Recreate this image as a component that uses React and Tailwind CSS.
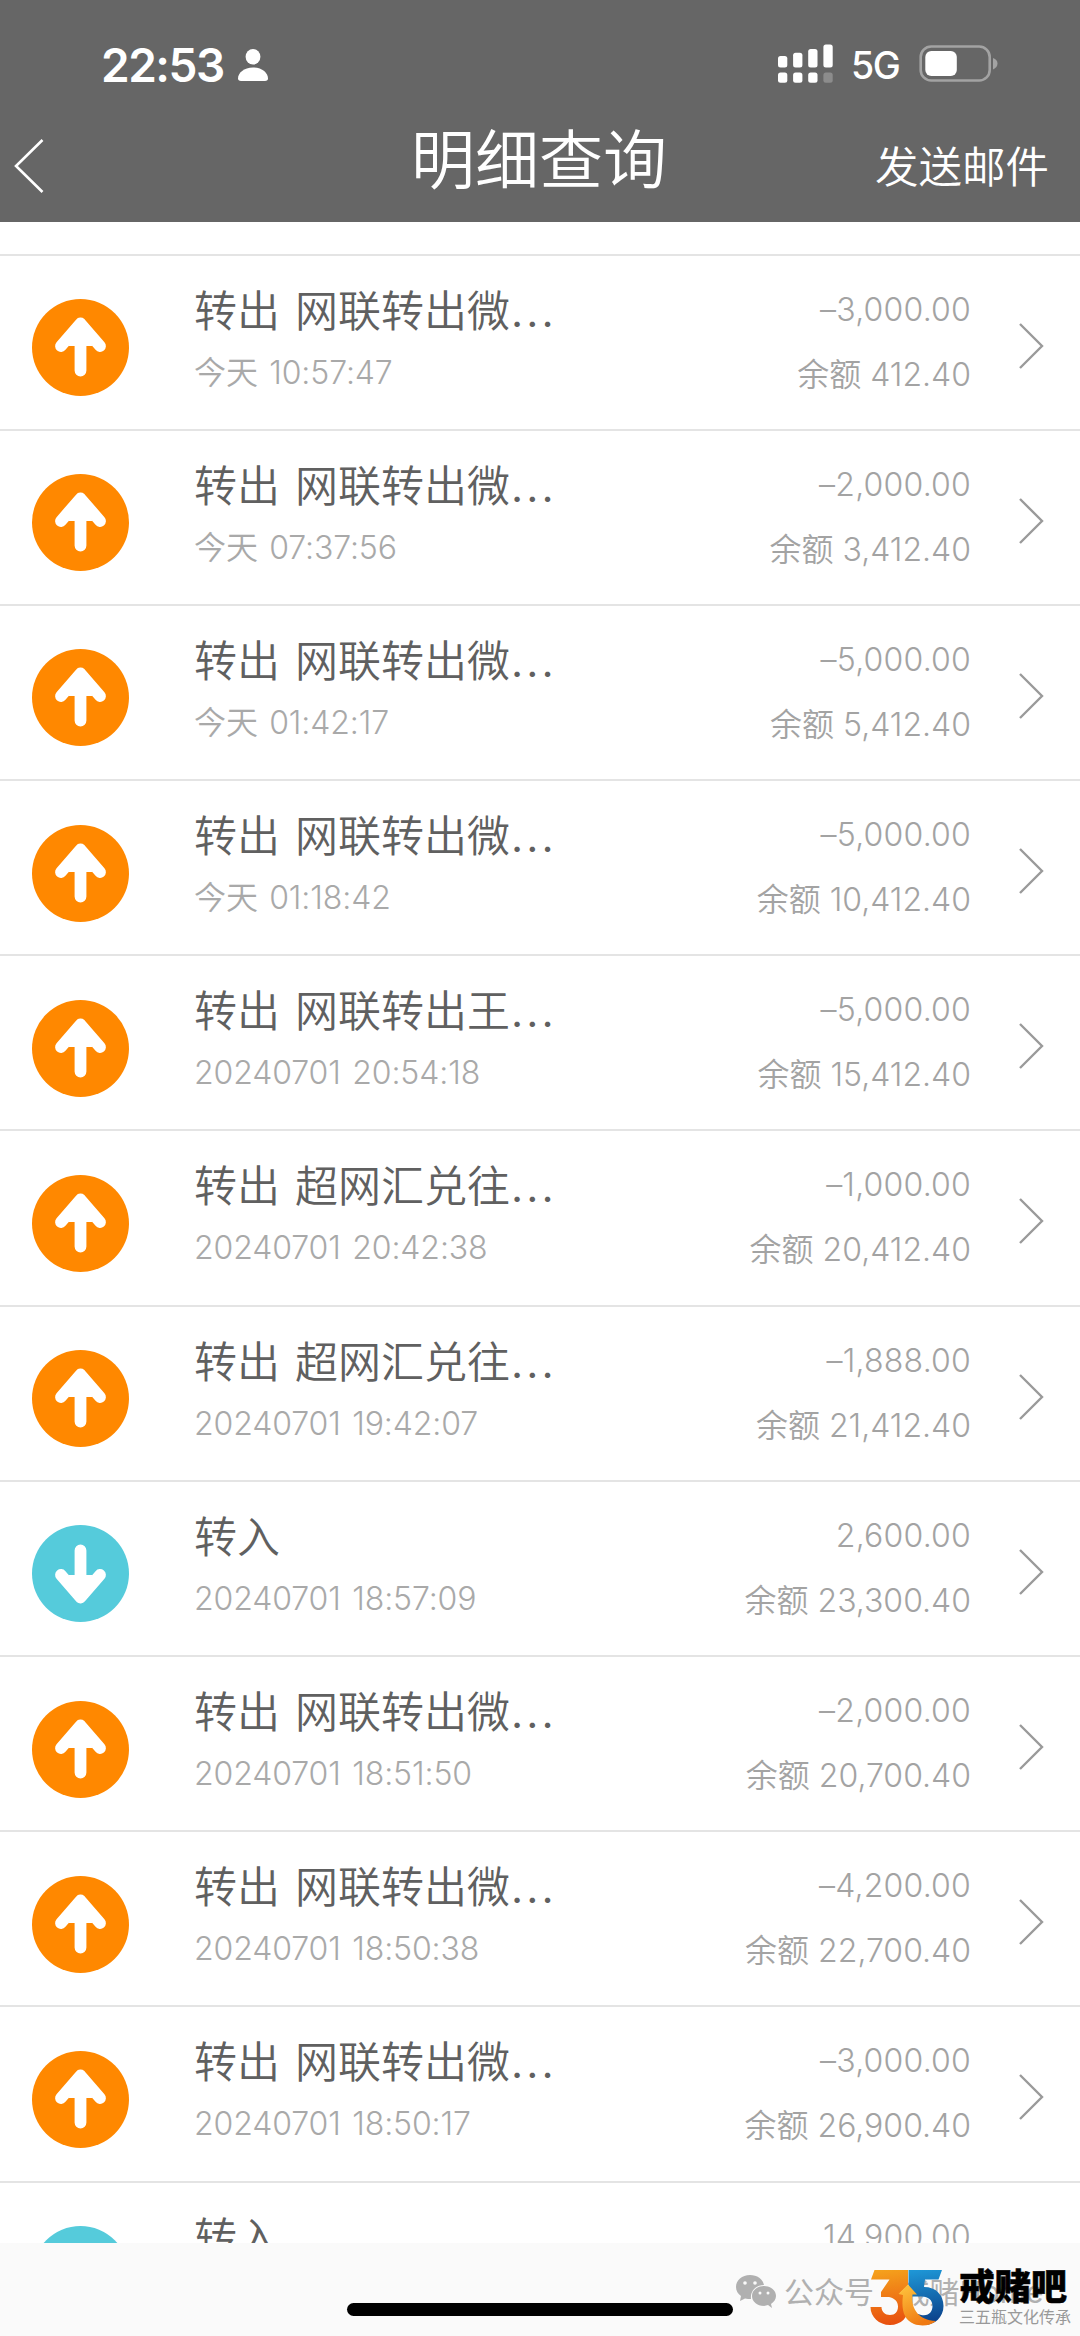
import { clsx } from "clsx";

const registros = [
  { tipo: "out", titulo: "转出 网联转出微", fecha: "今天 10:57:47", monto: "–3,000.00", saldo: "412.40" },
  { tipo: "out", titulo: "转出 网联转出微", fecha: "今天 07:37:56", monto: "–2,000.00", saldo: "3,412.40" },
  { tipo: "out", titulo: "转出 网联转出微", fecha: "今天 01:42:17", monto: "–5,000.00", saldo: "5,412.40" },
  { tipo: "out", titulo: "转出 网联转出微", fecha: "今天 01:18:42", monto: "–5,000.00", saldo: "10,412.40" },
  { tipo: "out", titulo: "转出 网联转出王", fecha: "20240701 20:54:18", monto: "–5,000.00", saldo: "15,412.40" },
  { tipo: "out", titulo: "转出 超网汇兑往", fecha: "20240701 20:42:38", monto: "–1,000.00", saldo: "20,412.40" },
  { tipo: "out", titulo: "转出 超网汇兑往", fecha: "20240701 19:42:07", monto: "–1,888.00", saldo: "21,412.40" },
  { tipo: "in", titulo: "转入", fecha: "20240701 18:57:09", monto: "2,600.00", saldo: "23,300.40" },
  { tipo: "out", titulo: "转出 网联转出微", fecha: "20240701 18:51:50", monto: "–2,000.00", saldo: "20,700.40" },
  { tipo: "out", titulo: "转出 网联转出微", fecha: "20240701 18:50:38", monto: "–4,200.00", saldo: "22,700.40" },
  { tipo: "out", titulo: "转出 网联转出微", fecha: "20240701 18:50:17", monto: "–3,000.00", saldo: "26,900.40" },
  { tipo: "in", titulo: "转入", fecha: "", monto: "14,900.00", saldo: "" },
];

function IconoTipo({ tipo }) {
  return (
    <svg
      viewBox="0 0 97 97"
      className={clsx("mt-[43.5px] ml-8 h-[97px] w-[97px] shrink-0", tipo === "in" && "rotate-180")}
    >
      <circle cx="48.5" cy="48.5" r="48.5" fill={tipo === "in" ? "#55cbdb" : "#ff8800"} />
      <path d="M48.5 26v45.5M29 47 48.5 24.5 68 47" fill="none" stroke="#fff" strokeWidth="11.8" strokeLinecap="round" strokeLinejoin="round" />
      <path d="M48.5 22 36.5 47H60.5Z" fill="#fff" />
    </svg>
  );
}

function Fila({ item }) {
  return (
    <div className="flex h-[175.2px] shrink-0 border-t-2 border-[#e4e4e4]">
      <IconoTipo tipo={item.tipo} />

      {/* DETALLE */}
      <div className="ml-[65px] w-[380px] pt-[25px]">
        <p className="h-[60px] text-[43px] leading-[60px] font-[350] whitespace-nowrap text-[#606060] [word-spacing:3px]">
          {item.titulo}
          {item.tipo === "out" && <span className="ml-[2px] font-['Lato'] font-normal tracking-[5px]">...</span>}
        </p>
        <p className="mt-[10px] h-[44px] text-[32px] leading-[44px] font-[350] tracking-[-0.1px] whitespace-nowrap text-[#a9a9a9] [word-spacing:2.5px]">
          {item.fecha}
        </p>
      </div>

      {/* MONTO */}
      <div className="ml-auto pt-[32px] text-right text-[32px] leading-[44px] font-[350] whitespace-nowrap text-[#a3a3a3]">
        <p className="h-[44px] tracking-[0.2px]">{item.monto}</p>
        {item.saldo && <p className="mt-[21px] h-[44px]">余额 {item.saldo}</p>}
      </div>

      <svg viewBox="0 0 26 48" className="mt-[66px] mr-[36px] ml-[47px] h-12 w-[26px] shrink-0">
        <path d="M2 2 24 24 2 46" fill="none" stroke="#9a9a9a" strokeWidth="2.4" />
      </svg>
    </div>
  );
}

function BarraEstado() {
  return (
    <div className="flex h-[110px] text-white">
      <span className="mt-[37px] ml-[101px] w-[137px] text-[46px] leading-[56px] font-semibold tracking-[-1.5px] whitespace-nowrap">22:53</span>
      <svg viewBox="0 0 30 32" className="mt-[49px] h-8 w-[30px]">
        <ellipse cx="15" cy="7.8" rx="7.4" ry="7.8" fill="#fff" />
        <path d="M3 32C1 32 0 31 0 29.5 0 24 6 18.6 15 18.6S30 24 30 29.5C30 31 29 32 27 32Z" fill="#fff" />
      </svg>

      <svg viewBox="0 0 56 40" className="mt-[44px] ml-auto h-10 w-14">
        <g fill="#fff">
          <rect x="0" y="12" width="9.3" height="11.5" rx="2.5" />
          <rect x="15.1" y="8.7" width="9.3" height="14.8" rx="2.5" />
          <rect x="30.2" y="5" width="9.3" height="18.5" rx="2.5" />
          <rect x="45.4" y="0.5" width="9.3" height="23" rx="2.5" />
          <rect x="0" y="28.5" width="9.3" height="10.3" rx="2.5" />
          <rect x="15.1" y="28.5" width="9.3" height="10.3" rx="2.5" />
          <rect x="30.2" y="28.5" width="9.3" height="10.3" rx="2.5" />
        </g>
        <rect x="45.4" y="28.5" width="9.3" height="10.3" rx="2.5" fill="#8c8c8c" />
      </svg>
      <span className="mt-[42px] ml-[17px] w-[68px] text-[37.5px] leading-[48px] font-medium tracking-[-1.5px]">5G</span>
      <svg viewBox="0 0 80 38" className="mt-[45px] mr-[81px] h-[38px] w-20">
        <rect x="1.7" y="1.5" width="69" height="34" rx="10.5" fill="none" stroke="#a3a3a3" strokeWidth="2.6" />
        <rect x="6.3" y="6" width="31.5" height="25" rx="6" fill="#fff" />
        <path d="M74 13c6 2 6 9 0 11.5Z" fill="#a3a3a3" />
      </svg>
    </div>
  );
}

function Logo35() {
  return (
    <svg viewBox="0 0 76 58" className="h-[58px] w-[76px]">
      <defs>
        <linearGradient id="tres" x1="0.3" y1="0" x2="0.4" y2="1">
          <stop offset="0" stopColor="#f5a11c" />
          <stop offset="1" stopColor="#e8500f" />
        </linearGradient>
        <linearGradient id="cinco" x1="0.3" y1="0" x2="0.4" y2="1">
          <stop offset="0" stopColor="#1e96d6" />
          <stop offset="1" stopColor="#0b3f88" />
        </linearGradient>
        <linearGradient id="flecha" x1="0" y1="0" x2="0.5" y2="1">
          <stop offset="0" stopColor="#ffc840" />
          <stop offset="1" stopColor="#f07a12" />
        </linearGradient>
      </defs>
      <path d="M4.5 2H38V17L30 25C36 28 39 32 39 38 39 49 31 57 20 57S0.5 49 0.5 39H11.5C11.5 43.5 15 47 20 47S28 43.5 28 38.5 24.5 30 19 29H11V24L19.5 11.5H1Z" fill="url(#tres)" />
      <path d="M38.5 2H72L68.5 11.5H55L54 19C66 19 73.5 27 73.5 38 73.5 49 65 57 54 57L44 50 48 46C58 50 62.5 44 62.5 38S58 28.5 52 28.5H42L38.5 17Z" fill="url(#cinco)" />
      <path d="M28.5 26 38 16.5 47 26.5H42.5C41 38 46 52 66 53 60 58 51 58.5 44 56 34 52 31 42 33 27Z" fill="url(#flecha)" />
    </svg>
  );
}

export default function App() {
  return (
    <div className="relative flex h-[2336px] w-[1080px] flex-col overflow-hidden bg-white font-['Inter','Noto_Sans_CJK_SC',sans-serif]">

      {/* HEADER */}
      <header className="h-[222px] shrink-0 bg-[#666]">
        <BarraEstado />
        <div className="flex h-[112px] text-white">
          <svg viewBox="0 0 32 56" className="mt-[28px] ml-[13px] h-14 w-8">
            <path d="M29.5 2 3 28 29.5 54" fill="none" stroke="#fff" strokeWidth="2.6" />
          </svg>
          <h1 className="mt-[5px] ml-[366px] w-[260px] text-[64px] leading-[90px] font-[350] whitespace-nowrap">明细查询</h1>
          <span className="mt-[27px] mr-[31px] ml-auto text-[43.5px] leading-[60px] font-[350] whitespace-nowrap">发送邮件</span>
        </div>
      </header>

      {/* LISTA */}
      <main className="flex h-[2021px] shrink-0 flex-col overflow-hidden pt-[31.5px]">
        {registros.map((item, i) => (
          <Fila key={i} item={item} />
        ))}
      </main>

      {/* PIE */}
      <footer className="relative h-[93px] shrink-0 bg-[#fafafa]">
        <div className="absolute top-[60px] left-[347px] h-[13px] w-[386px] rounded-full bg-black" />

        <div className="absolute top-[32px] left-[736px] flex text-[#b0b0b0]">
          <svg viewBox="0 0 41 33" className="h-[33px] w-[41px]">
            <path d="M14 0C6 0 0 5 0 12 0 16 2 19 5 21L4 26 9 23.5C11 24 13 24 15 24 14 16 20 10 28 10 27 4 21 0 14 0Z" fill="#b0b0b0" />
            <path d="M28 11C21 11 16 15.5 16 21S21 31 28 31L32 30 36 33 35 29C38 27 40 24 40 21 40 15.5 35 11 28 11Z" fill="#b0b0b0" />
            <g fill="#fafafa">
              <circle cx="9" cy="8" r="1.8" />
              <circle cx="19" cy="8" r="1.8" />
              <circle cx="24" cy="18" r="1.5" />
              <circle cx="32" cy="18" r="1.5" />
            </g>
          </svg>
          <span className="mt-[-5px] ml-[7px] text-[30px] leading-[44px] whitespace-nowrap">公众号 · 戒赌Home</span>
        </div>

        <div className="absolute top-[25px] left-[870px] flex">
          <Logo35 />
          <div className="ml-[13px] flex flex-col">
            <span className="h-[40px] text-[36px] leading-[38px] font-black whitespace-nowrap text-black [-webkit-text-stroke:0.5px_#000]">戒赌吧</span>
            <span className="text-[16px] leading-[18px] whitespace-nowrap text-[#999]">三五瓶文化传承</span>
          </div>
        </div>
      </footer>

    </div>
  );
}
